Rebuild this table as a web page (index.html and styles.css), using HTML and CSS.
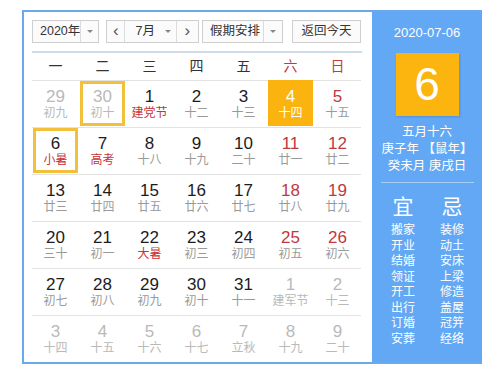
FILE: index.html
```html
<!DOCTYPE html>
<html>
<head>
<meta charset="utf-8">
<link rel="stylesheet" href="styles.css">
</head>
<body>
<div class="cal">
  <div class="main">
    <div class="toolbar">
      <div class="sel year"><span class="txt">2020年</span><span class="arr"><i></i></span></div>
      <div class="sel month">
        <span class="nav">&lsaquo;</span>
        <span class="txt">7月</span><span class="arr inner"><i></i></span>
        <span class="nav right">&rsaquo;</span>
      </div>
      <div class="sel hol"><span class="txt">假期安排</span><span class="arr"><i></i></span></div>
      <div class="btn">返回今天</div>
    </div>
    <div class="week">
      <span>一</span><span>二</span><span>三</span><span>四</span><span>五</span><span class="we">六</span><span class="we">日</span>
    </div>
    <div class="grid">
      <div class="cell other"><div class="day"><b>29</b><em>初九</em></div></div>
      <div class="cell other"><div class="day boxed"><b>30</b><em>初十</em></div></div>
      <div class="cell"><div class="day"><b>1</b><em class="fest">建党节</em></div></div>
      <div class="cell"><div class="day"><b>2</b><em>十二</em></div></div>
      <div class="cell"><div class="day"><b>3</b><em>十三</em></div></div>
      <div class="cell"><div class="day filled"><b>4</b><em>十四</em></div></div>
      <div class="cell wk"><div class="day"><b>5</b><em>十五</em></div></div>

      <div class="cell"><div class="day boxed"><b>6</b><em class="fest">小暑</em></div></div>
      <div class="cell"><div class="day"><b>7</b><em class="fest">高考</em></div></div>
      <div class="cell"><div class="day"><b>8</b><em>十八</em></div></div>
      <div class="cell"><div class="day"><b>9</b><em>十九</em></div></div>
      <div class="cell"><div class="day"><b>10</b><em>二十</em></div></div>
      <div class="cell wk"><div class="day"><b>11</b><em>廿一</em></div></div>
      <div class="cell wk"><div class="day"><b>12</b><em>廿二</em></div></div>

      <div class="cell"><div class="day"><b>13</b><em>廿三</em></div></div>
      <div class="cell"><div class="day"><b>14</b><em>廿四</em></div></div>
      <div class="cell"><div class="day"><b>15</b><em>廿五</em></div></div>
      <div class="cell"><div class="day"><b>16</b><em>廿六</em></div></div>
      <div class="cell"><div class="day"><b>17</b><em>廿七</em></div></div>
      <div class="cell wk"><div class="day"><b>18</b><em>廿八</em></div></div>
      <div class="cell wk"><div class="day"><b>19</b><em>廿九</em></div></div>

      <div class="cell"><div class="day"><b>20</b><em>三十</em></div></div>
      <div class="cell"><div class="day"><b>21</b><em>初一</em></div></div>
      <div class="cell"><div class="day"><b>22</b><em class="fest">大暑</em></div></div>
      <div class="cell"><div class="day"><b>23</b><em>初三</em></div></div>
      <div class="cell"><div class="day"><b>24</b><em>初四</em></div></div>
      <div class="cell wk"><div class="day"><b>25</b><em>初五</em></div></div>
      <div class="cell wk"><div class="day"><b>26</b><em>初六</em></div></div>

      <div class="cell"><div class="day"><b>27</b><em>初七</em></div></div>
      <div class="cell"><div class="day"><b>28</b><em>初八</em></div></div>
      <div class="cell"><div class="day"><b>29</b><em>初九</em></div></div>
      <div class="cell"><div class="day"><b>30</b><em>初十</em></div></div>
      <div class="cell"><div class="day"><b>31</b><em>十一</em></div></div>
      <div class="cell other"><div class="day"><b>1</b><em>建军节</em></div></div>
      <div class="cell other"><div class="day"><b>2</b><em>十三</em></div></div>

      <div class="cell other"><div class="day"><b>3</b><em>十四</em></div></div>
      <div class="cell other"><div class="day"><b>4</b><em>十五</em></div></div>
      <div class="cell other"><div class="day"><b>5</b><em>十六</em></div></div>
      <div class="cell other"><div class="day"><b>6</b><em>十七</em></div></div>
      <div class="cell other"><div class="day"><b>7</b><em>立秋</em></div></div>
      <div class="cell other"><div class="day"><b>8</b><em>十九</em></div></div>
      <div class="cell other"><div class="day"><b>9</b><em>二十</em></div></div>
    </div>
  </div>
  <div class="side">
    <div class="date">2020-07-06</div>
    <div class="big">6</div>
    <div class="lunar">五月十六</div>
    <div class="lunar">庚子年 【鼠年】</div>
    <div class="lunar">癸未月 庚戌日</div>
    <div class="sep"></div>
    <div class="yj">
      <div class="col">
        <div class="head">宜</div>
        <div>搬家</div><div>开业</div><div>结婚</div><div>领证</div><div>开工</div><div>出行</div><div>订婚</div><div>安葬</div>
      </div>
      <div class="col">
        <div class="head">忌</div>
        <div>装修</div><div>动土</div><div>安床</div><div>上梁</div><div>修造</div><div>盖屋</div><div>冠笄</div><div>经络</div>
      </div>
    </div>
  </div>
</div>
</body>
</html>
```

FILE: styles.css
```css
* { box-sizing: border-box; margin: 0; padding: 0; }
html, body { background: #fff; }
body {
  font-family: "Liberation Sans", "Noto Sans CJK SC", sans-serif;
  color: #333;
  padding: 10px 0 0 22px;
}
.cal {
  display: flex;
  width: 460px;
  height: 354px;
  border: 2px solid #6aa9ec;
  border-right: none;
  background: #fff;
}
.main {
  width: 348px;
  padding: 8px 0 0 8px;
}
.toolbar {
  display: flex;
  height: 23px;
  font-size: 12.5px;
  color: #333;
  white-space: nowrap;
}
.sel, .btn {
  display: flex;
  align-items: stretch;
  height: 23px;
  border: 1px solid #cfcfcf;
  background: #fbfbfb;
  line-height: 21px;
}
.txt { white-space: nowrap; overflow: hidden; }
.year { width: 67px; }
.year .txt { width: 48px; padding-left: 7px; border-right: 1px solid #dcdcdc; }
.arr { flex: 1; display: flex; align-items: center; justify-content: center; }
.arr i {
  width: 0; height: 0;
  border-left: 3px solid transparent;
  border-right: 3px solid transparent;
  border-top: 3px solid #888;
}
.month { width: 93px; margin-left: 7px; }
.nav {
  width: 19px;
  text-align: center;
  font-size: 17px;
  color: #555;
  border-right: 1px solid #dcdcdc;
  line-height: 19px;
}
.nav.right { width: 23px; border-right: none; border-left: 1px solid #dcdcdc; }
.month .txt { padding-left: 10px; width: 36px; }
.month .arr.inner { width: 15px; flex: none; }
.hol { width: 81px; margin-left: 3px; }
.hol .txt { width: 61px; padding-left: 7px; border-right: 1px solid #dcdcdc; }
.btn { width: 69px; margin-left: 9px; justify-content: center; }
.week {
  display: grid;
  grid-template-columns: repeat(7, 47px);
  width: 330px;
  margin-top: 8px;
  border-top: 2px solid #cfdbe8;
  height: 29px;
  font-size: 14px;
  line-height: 27px;
  text-align: center;
  color: #333;
}
.week .we { color: #c6383b; }
.grid {
  display: grid;
  grid-template-columns: repeat(7, 47px);
  grid-auto-rows: 47px;
  width: 330px;
}
.cell { border-top: 1px solid #e2e2e2; }
.day {
  width: 45px;
  height: 45px;
  margin: 0 1px;
  border: 3px solid transparent;
  padding-top: 4px;
  display: flex;
  flex-direction: column;
  align-items: center;
}
.day b {
  font-weight: normal;
  font-size: 17px;
  line-height: 18px;
  color: #1c1c1c;
}
.day em {
  font-style: normal;
  font-size: 12px;
  line-height: 14px;
  color: #9a9a9a;
}
.day em.fest { color: #c8333a; }
.wk .day b { color: #c0393c; }
.other .day b, .other .day em { color: #b9b9b9; }
.day.boxed { border-color: #f3c03c; }
.day.filled { background: #fbb40f; border-color: #fbb40f; margin-top: -1px; height: 46px; padding-top: 5px; }
.day.filled b, .day.filled em { color: #fff; }
.side {
  width: 110px;
  background: #62a8f5;
  color: #fff;
  padding-top: 13px;
  display: flex;
  flex-direction: column;
  align-items: center;
}
.date { font-size: 13px; line-height: 16px; }
.big {
  margin-top: 12px;
  width: 63px;
  height: 63px;
  background: #fcb40e;
  font-size: 46px;
  line-height: 63px;
  text-align: center;
  box-shadow: 1px 1px 2px rgba(0,0,0,0.15);
}
.lunar { font-size: 12.5px; line-height: 17px; white-space: nowrap; }
.big + .lunar { margin-top: 8px; }
.sep {
  margin-top: 7px;
  width: 93px;
  height: 1px;
  background: rgba(255,255,255,0.45);
}
.yj {
  display: grid;
  grid-template-columns: 49px 49px;
  margin-top: 12px;
  width: 98px;
  margin-left: 1px;
}
.col { text-align: center; font-size: 12px; line-height: 15.5px; }
.col .head { font-size: 21px; line-height: 24px; margin-bottom: 4px; }
```
